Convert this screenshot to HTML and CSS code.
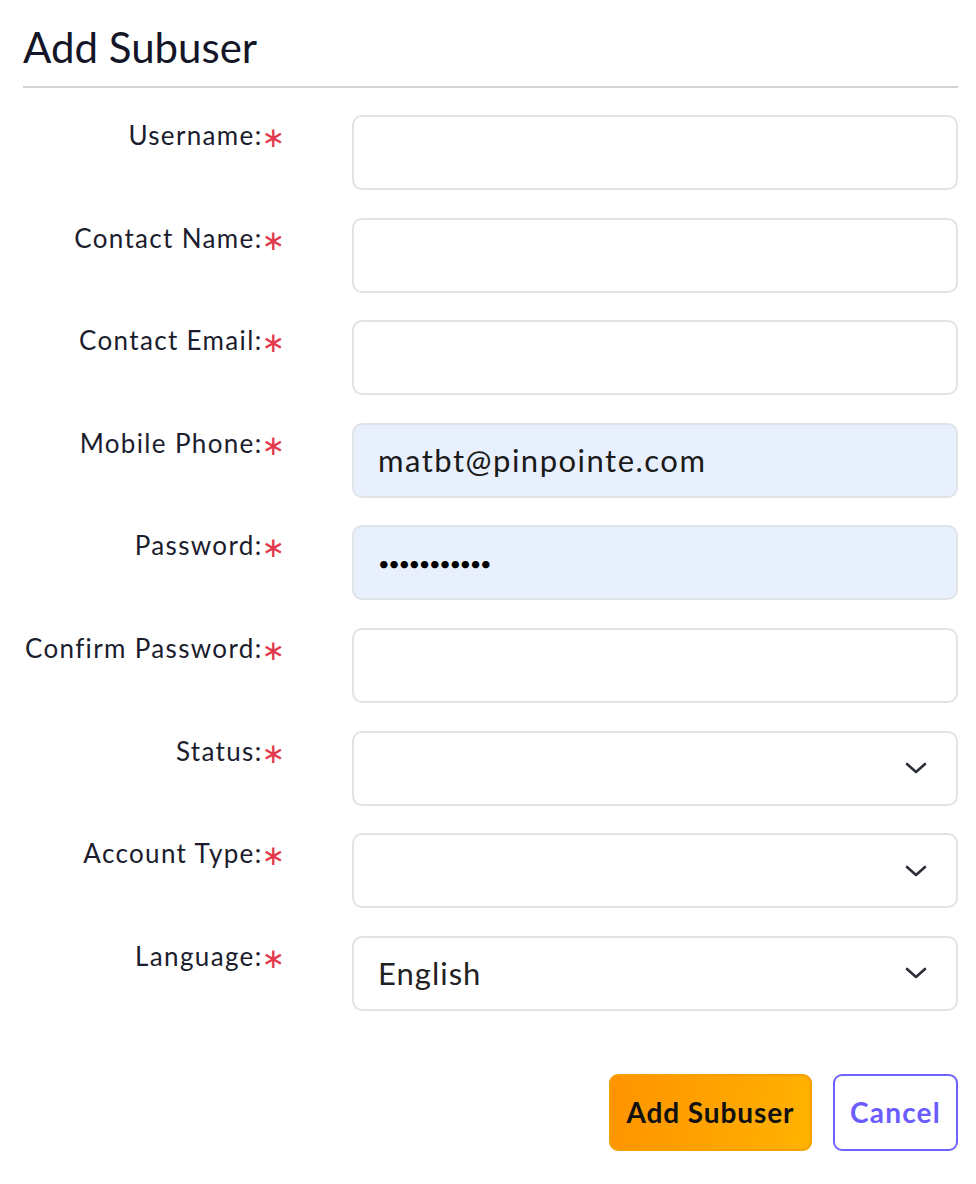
FILE: index.html
```html
<!DOCTYPE html>
<html>
<head>
<meta charset="utf-8">
<link rel="stylesheet" href="styles.css">
</head>
<body>
<div class="page">
  <h1 class="title">Add Subuser</h1>
  <div class="rule"></div>
  <form class="form">
    <label class="label">Username:<span class="req">∗</span></label>
    <div class="field"></div>
    <label class="label">Contact Name:<span class="req">∗</span></label>
    <div class="field"></div>
    <label class="label">Contact Email:<span class="req">∗</span></label>
    <div class="field"></div>
    <label class="label">Mobile Phone:<span class="req">∗</span></label>
    <div class="field filled">matbt@pinpointe.com</div>
    <label class="label">Password:<span class="req">∗</span></label>
    <div class="field filled dots">•••••••••••</div>
    <label class="label">Confirm Password:<span class="req">∗</span></label>
    <div class="field"></div>
    <label class="label">Status:<span class="req">∗</span></label>
    <div class="field select"><span></span><svg class="chev" viewBox="0 0 24 14" width="24" height="14"><path d="M3 3l9 8 9-8" fill="none" stroke="#2b2f36" stroke-width="2.6" stroke-linecap="round" stroke-linejoin="round"/></svg></div>
    <label class="label">Account Type:<span class="req">∗</span></label>
    <div class="field select"><span></span><svg class="chev" viewBox="0 0 24 14" width="24" height="14"><path d="M3 3l9 8 9-8" fill="none" stroke="#2b2f36" stroke-width="2.6" stroke-linecap="round" stroke-linejoin="round"/></svg></div>
    <label class="label">Language:<span class="req">∗</span></label>
    <div class="field select"><span>English</span><svg class="chev" viewBox="0 0 24 14" width="24" height="14"><path d="M3 3l9 8 9-8" fill="none" stroke="#2b2f36" stroke-width="2.6" stroke-linecap="round" stroke-linejoin="round"/></svg></div>
  </form>
  <div class="actions">
    <button class="btn primary" type="button">Add Subuser</button>
    <button class="btn secondary" type="button">Cancel</button>
  </div>
</div>
</body>
</html>
```
FILE: styles.css
```css
html, body {
  margin: 0;
  padding: 0;
  background: #ffffff;
}
body {
  font-family: "Lato", "Noto Sans", sans-serif;
  color: #1b1d2e;
}
.page {
  padding: 0 18px 0 23px;
}
.title {
  margin: 0;
  padding-top: 22px;
  font-size: 42px;
  font-weight: 400;
  line-height: 50px;
  color: #141628;
}
.rule {
  margin-top: 14px;
  height: 2px;
  background: #d4d4d6;
}
.form {
  display: grid;
  grid-template-columns: 262px 1fr;
  column-gap: 67px;
  row-gap: 27.6px;
  margin-top: 27px;
}
.label {
  text-align: right;
  font-size: 26px;
  line-height: 32px;
  padding-top: 4px;
  letter-spacing: 1.35px;
  color: #1b1d2e;
  white-space: nowrap;
}
.req {
  font-family: "DejaVu Sans", sans-serif;
  color: #e23a4c;
  font-size: 28px;
  letter-spacing: 0;
  margin-left: -1px;
  position: relative;
  top: 2px;
}
.field {
  box-sizing: border-box;
  height: 75px;
  border: 2px solid #e0e3e7;
  border-radius: 10px;
  background: #ffffff;
  padding: 0 24px;
  display: flex;
  align-items: center;
  font-size: 31px;
  letter-spacing: 1.5px;
  color: #1a1a1a;
}
.filled {
  background: #e8f0fe;
}
.dots {
  font-size: 20px;
  letter-spacing: -1.4px;
  color: #000;
}
.select {
  justify-content: space-between;
  padding-right: 28px;
}
.select span {
  color: #222;
  letter-spacing: 1px;
}
.chev {
  display: block;
}
.actions {
  display: flex;
  justify-content: flex-end;
  gap: 21px;
  margin-top: 63px;
}
.btn {
  font-family: inherit;
  font-size: 28px;
  height: 77px;
  border-radius: 9px;
  cursor: pointer;
  padding: 0;
}
.primary {
  width: 203px;
  background: linear-gradient(100deg, #ff9300 0%, #ffb200 100%);
  border: 2px solid #f5a000;
  color: #111;
  font-weight: 700;
  letter-spacing: 0.9px;
}
.secondary {
  width: 125px;
  background: #fff;
  border: 2px solid #6e63ff;
  color: #6b5cff;
  font-weight: 700;
  letter-spacing: 1.2px;
}
```
